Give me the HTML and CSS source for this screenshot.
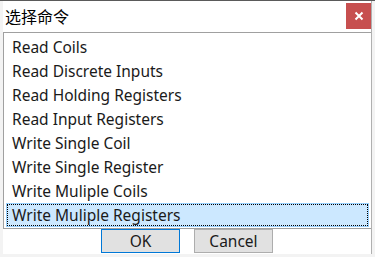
FILE: index.html
```html
<!DOCTYPE html>
<html lang="zh-CN">
<head>
    <meta charset="UTF-8">
    <title>选择命令</title>
    <link rel="stylesheet" href="styles.css">
</head>
<body>
    <div class="dialog">
        <div class="titlebar">
            <span class="title">选择命令</span>
            <button class="close">
                <svg width="10" height="10" viewBox="0 0 10 10"><path d="M1.5 1.5 L8.5 8.5 M8.5 1.5 L1.5 8.5" stroke="#fff" stroke-width="2"/></svg>
            </button>
        </div>
        <ul class="list">
            <li>Read Coils</li>
            <li>Read Discrete Inputs</li>
            <li>Read Holding Registers</li>
            <li>Read Input Registers</li>
            <li>Write Single Coil</li>
            <li>Write Single Register</li>
            <li>Write Muliple Coils</li>
            <li class="selected"><span>Write Muliple Registers</span></li>
        </ul>
        <div class="buttons">
            <button class="btn default">OK</button>
            <button class="btn">Cancel</button>
        </div>
    </div>
</body>
</html>
```

FILE: styles.css
```css
body {
    margin: 0;
    height: 257px;
    background-color: #f3f3f3;
    border-top: 1px solid #5a5a5a;
    box-sizing: border-box;
    font-family: "Noto Sans", "Noto Sans CJK SC", sans-serif;
    color: #1a1a1a;
    overflow: hidden;
}
.dialog {
    margin-left: 3px;
    width: 369px;
    background-color: white;
    border-right: 1px solid #b0b0b0;
    box-sizing: border-box;
}
.titlebar {
    height: 31px;
    display: flex;
    align-items: flex-start;
    justify-content: space-between;
}
.title {
    font-family: "Noto Sans CJK SC", sans-serif;
    font-size: 16px;
    line-height: 30px;
    padding-left: 2px;
    color: #000;
}
.close {
    margin-top: 2px;
    width: 25px;
    height: 26px;
    border: none;
    padding: 0;
    background-color: #c74f4f;
    display: flex;
    align-items: center;
    justify-content: center;
}
.list {
    list-style: none;
    margin: 0;
    padding: 2px 2px 1px 2px;
    border: 1px solid #a0a0a0;
    border-right: none;
    height: 197px;
    box-sizing: border-box;
}
.list li {
    height: 24px;
    line-height: 24px;
    font-size: 15.5px;
    padding-left: 6px;
}
.list li.selected {
    background-color: #cce8ff;
    border: 1px solid #99d1ff;
    padding: 0;
    box-sizing: border-box;
}
.list li.selected span {
    display: block;
    height: 100%;
    box-sizing: border-box;
    border: 1px dotted #000;
    padding-left: 4px;
    line-height: 20px;
}
.buttons {
    display: flex;
    gap: 14px;
    padding-left: 98px;
    height: 25px;
    align-items: flex-start;
}
.btn {
    width: 79px;
    height: 24px;
    background-color: #e1e1e1;
    border: 1px solid #adadad;
    font-family: "Noto Sans", sans-serif;
    font-size: 15.5px;
    color: #1a1a1a;
    padding: 0;
    line-height: 20px;
}
.btn.default {
    border-color: #0078d7;
}
```
